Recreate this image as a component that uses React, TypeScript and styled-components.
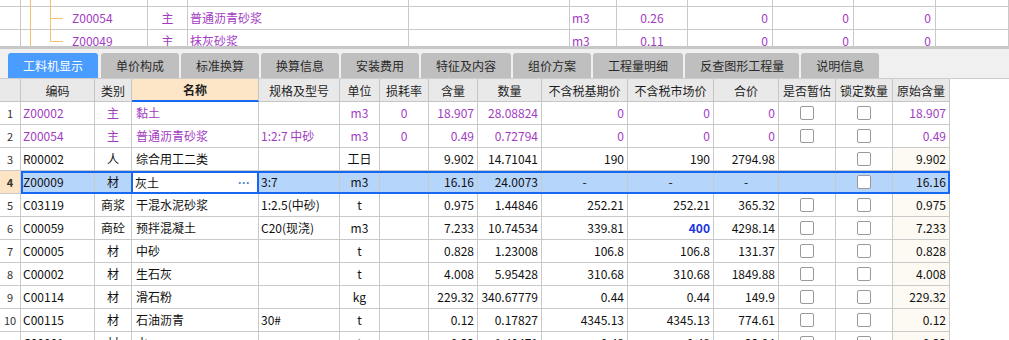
import React from 'react';
import styled, { createGlobalStyle, css } from 'styled-components';

const GlobalStyle = createGlobalStyle`
  html, body {
    margin: 0;
    padding: 0;
    background: #ffffff;
  }
  * {
    box-sizing: border-box;
  }
`;

const FONT = `"Noto Sans CJK SC", "Liberation Sans", sans-serif`;
const PURPLE = '#a23bc2';
const LINE = '#c9c9c9';
const BLUE = '#1668f2';

type Align = 'left' | 'center' | 'right';

type Material = {
  no: number;
  code: string;
  kind: string;
  name: string;
  spec: string;
  unit: string;
  loss: string;
  qty: string;
  amount: string;
  basePrice: string;
  marketPrice: string;
  total: string;
  estimate: boolean;
  orig: string;
  purple?: boolean;
  selected?: boolean;
  marketBold?: boolean;
};

const materials: Material[] = [
  { no: 1, code: 'Z00002', kind: '主', name: '黏土', spec: '', unit: 'm3', loss: '0', qty: '18.907', amount: '28.08824', basePrice: '0', marketPrice: '0', total: '0', estimate: true, orig: '18.907', purple: true },
  { no: 2, code: 'Z00054', kind: '主', name: '普通沥青砂浆', spec: '1:2:7 中砂', unit: 'm3', loss: '0', qty: '0.49', amount: '0.72794', basePrice: '0', marketPrice: '0', total: '0', estimate: true, orig: '0.49', purple: true },
  { no: 3, code: 'R00002', kind: '人', name: '综合用工二类', spec: '', unit: '工日', loss: '', qty: '9.902', amount: '14.71041', basePrice: '190', marketPrice: '190', total: '2794.98', estimate: false, orig: '9.902' },
  { no: 4, code: 'Z00009', kind: '材', name: '灰土', spec: '3:7', unit: 'm3', loss: '', qty: '16.16', amount: '24.0073', basePrice: '-', marketPrice: '-', total: '-', estimate: false, orig: '16.16', selected: true },
  { no: 5, code: 'C03119', kind: '商浆', name: '干混水泥砂浆', spec: '1:2.5(中砂)', unit: 't', loss: '', qty: '0.975', amount: '1.44846', basePrice: '252.21', marketPrice: '252.21', total: '365.32', estimate: true, orig: '0.975' },
  { no: 6, code: 'C00059', kind: '商砼', name: '预拌混凝土', spec: 'C20(现浇)', unit: 'm3', loss: '', qty: '7.233', amount: '10.74534', basePrice: '339.81', marketPrice: '400', total: '4298.14', estimate: true, orig: '7.233', marketBold: true },
  { no: 7, code: 'C00005', kind: '材', name: '中砂', spec: '', unit: 't', loss: '', qty: '0.828', amount: '1.23008', basePrice: '106.8', marketPrice: '106.8', total: '131.37', estimate: true, orig: '0.828' },
  { no: 8, code: 'C00002', kind: '材', name: '生石灰', spec: '', unit: 't', loss: '', qty: '4.008', amount: '5.95428', basePrice: '310.68', marketPrice: '310.68', total: '1849.88', estimate: true, orig: '4.008' },
  { no: 9, code: 'C00114', kind: '材', name: '滑石粉', spec: '', unit: 'kg', loss: '', qty: '229.32', amount: '340.67779', basePrice: '0.44', marketPrice: '0.44', total: '149.9', estimate: true, orig: '229.32' },
  { no: 10, code: 'C00115', kind: '材', name: '石油沥青', spec: '30#', unit: 't', loss: '', qty: '0.12', amount: '0.17827', basePrice: '4345.13', marketPrice: '4345.13', total: '774.61', estimate: true, orig: '0.12' },
  { no: 11, code: 'C00001', kind: '材', name: '水', spec: '', unit: 't', loss: '', qty: '0.33', amount: '1.40471', basePrice: '0.48', marketPrice: '0.48', total: '22.94', estimate: true, orig: '0.33' },
];

const tabs = ['工料机显示', '单价构成', '标准换算', '换算信息', '安装费用', '特征及内容', '组价方案', '工程量明细', '反查图形工程量', '说明信息'];

const headers = ['', '编码', '类别', '名称', '规格及型号', '单位', '损耗率', '含量', '数量', '不含税基期价', '不含税市场价', '合价', '是否暂估', '锁定数量', '原始含量'];

const COLS = '21px 74px 37px 127px 81px 40px 49px 49px 64px 86px 86px 65px 57px 57px 57px';
const REST = '74px 37px 127px 81px 40px 49px 49px 64px 86px 86px 65px 57px 57px 57px';
const TOP_COLS = '21px 127px 40px 221px 161px 47px 71px 85px 81px 82px 73px';

export default function App() {
  return (
    <>
      <GlobalStyle />
      <Page>
        <TopPanel>
          <TopBody>
            <TopRow>
              <TopCell />
              <TopCell $align="left">
                <TreeGuide branch={false} last={false} />
              </TopCell>
              {Array.from({ length: 9 }).map((_, i) => (
                <TopCell key={i} />
              ))}
            </TopRow>
            <TopRow>
              <TopCell />
              <TopCell $align="left" $purple>
                <TreeGuide branch last={false} />
                Z00054
              </TopCell>
              <TopCell $align="center" $purple>主</TopCell>
              <TopCell $align="left" $purple>普通沥青砂浆</TopCell>
              <TopCell />
              <TopCell $align="left" $purple>m3</TopCell>
              <TopCell $align="center" $purple>0.26</TopCell>
              <TopCell $align="right" $purple>0</TopCell>
              <TopCell $align="right" $purple>0</TopCell>
              <TopCell $align="right" $purple>0</TopCell>
              <TopCell />
            </TopRow>
            <TopRow>
              <TopCell />
              <TopCell $align="left" $purple>
                <TreeGuide branch last />
                Z00049
              </TopCell>
              <TopCell $align="center" $purple>主</TopCell>
              <TopCell $align="left" $purple>抹灰砂浆</TopCell>
              <TopCell />
              <TopCell $align="left" $purple>m3</TopCell>
              <TopCell $align="center" $purple>0.11</TopCell>
              <TopCell $align="right" $purple>0</TopCell>
              <TopCell $align="right" $purple>0</TopCell>
              <TopCell $align="right" $purple>0</TopCell>
              <TopCell />
            </TopRow>
          </TopBody>
        </TopPanel>
        <Splitter />
        <TabStrip>
          {tabs.map((t, i) => (
            <Tab key={t} $active={i === 0}>
              {t}
            </Tab>
          ))}
        </TabStrip>
        <GridPanel>
          <Grid>
            <HeaderRow>
              {headers.map((h, i) => (
                <HeaderCell key={i} $highlight={h === '名称'}>
                  {h}
                </HeaderCell>
              ))}
            </HeaderRow>
            {materials.map((m) => (
              <MaterialRow key={m.no} item={m} />
            ))}
          </Grid>
        </GridPanel>
      </Page>
    </>
  );
}

function TreeGuide({ branch, last }: { branch: boolean; last: boolean }) {
  return (
    <TreeSvg width="48" height="22" viewBox="0 0 48 22">
      <line x1="9.5" y1="0" x2="9.5" y2="22" stroke="#f7c16c" strokeWidth="1" />
      <line x1="29.5" y1="0" x2="29.5" y2={last ? 11.5 : 22} stroke="#f7c16c" strokeWidth="1" />
      {branch && <line x1="29.5" y1="11.5" x2="42" y2="11.5" stroke="#f7c16c" strokeWidth="1" />}
    </TreeSvg>
  );
}

function MaterialRow({ item }: { item: Material }) {
  const tone = item.purple ? 'purple' : 'normal';
  const cells = (
    <>
      <Cell $align="left" $tone={tone}>{item.code}</Cell>
      <Cell $align="center" $tone={tone}>{item.kind}</Cell>
      {item.selected ? (
        <EditCell>
          {item.name}
          <Dots>···</Dots>
        </EditCell>
      ) : (
        <Cell $align="left" $tone={tone} $pad={4}>{item.name}</Cell>
      )}
      <Cell $align="left" $tone={tone}>{item.spec}</Cell>
      <Cell $align="center" $tone={tone}>{item.unit}</Cell>
      <Cell $align="center" $tone={tone}>{item.loss}</Cell>
      <Cell $align="right" $tone={tone}>{item.qty}</Cell>
      <Cell $align="right" $tone={tone}>{item.amount}</Cell>
      <Cell $align={item.basePrice === '-' ? 'center' : 'right'} $tone={tone}>{item.basePrice}</Cell>
      <Cell $align={item.marketPrice === '-' ? 'center' : 'right'} $tone={item.marketBold ? 'strong' : tone}>
        {item.marketPrice}
      </Cell>
      <Cell $align={item.total === '-' ? 'center' : 'right'} $tone={tone}>{item.total}</Cell>
      <Cell $align="center">{item.estimate && <Check />}</Cell>
      <Cell $align="center">
        <Check />
      </Cell>
      <Cell $align="right" $tone={tone} $cream={!item.purple && !item.selected}>
        {item.orig}
      </Cell>
    </>
  );

  return (
    <BodyRow>
      <RowNo $current={!!item.selected}>{item.no}</RowNo>
      {item.selected ? <SelectedBand>{cells}</SelectedBand> : cells}
    </BodyRow>
  );
}

const Page = styled.div`
  width: 1009px;
  height: 340px;
  overflow: hidden;
  background: #ffffff;
  font-family: ${FONT};
  font-size: 12px;
  color: #111111;
`;

const TopPanel = styled.div`
  height: 46px;
  overflow: hidden;
  background: #ffffff;
`;

const TopBody = styled.div`
  margin-top: -16px;
`;

const TopRow = styled.div`
  display: grid;
  grid-template-columns: ${TOP_COLS};
  height: 23px;
`;

const TopCell = styled.div<{ $align?: Align; $purple?: boolean }>`
  display: flex;
  align-items: center;
  justify-content: ${(p) => (p.$align === 'right' ? 'flex-end' : p.$align === 'center' ? 'center' : 'flex-start')};
  padding: ${(p) => (p.$align === 'right' ? '0 4px 0 0' : p.$align === 'left' ? '0 0 0 2px' : '0')};
  border-right: 1px solid ${LINE};
  border-bottom: 1px solid ${LINE};
  color: ${(p) => (p.$purple ? PURPLE : '#111111')};
  line-height: 22px;
  white-space: nowrap;
  &:first-child {
    padding: 0;
  }
`;

const TreeSvg = styled.svg`
  flex: none;
  margin-left: -2px;
  margin-right: 3px;
  display: block;
`;

const Splitter = styled.div`
  height: 3px;
  background: #c8c8c8;
`;

const TabStrip = styled.div`
  display: flex;
  align-items: flex-end;
  gap: 2px;
  height: 29px;
  padding: 4px 0 0 8px;
  background: #f0f0f0;
`;

const Tab = styled.div<{ $active: boolean }>`
  height: 25px;
  padding: 0 15px;
  display: flex;
  align-items: center;
  justify-content: center;
  border-radius: 3px 3px 0 0;
  font-size: 12px;
  white-space: nowrap;
  background: #bfbfbf;
  color: #2a2a2a;
  ${(p) =>
    p.$active &&
    css`
      background: #4a9cff;
      color: #ffffff;
      margin-right: 1px;
    `}
`;

const GridPanel = styled.div`
  border-top: 1px solid #cccccc;
  background: #ffffff;
`;

const Grid = styled.div`
  width: 950px;
`;

const HeaderRow = styled.div`
  display: grid;
  grid-template-columns: ${COLS};
  height: 23px;
`;

const HeaderCell = styled.div<{ $highlight: boolean }>`
  display: flex;
  align-items: center;
  justify-content: center;
  background: #e9e9e9;
  border-right: 1px solid #c6c6c6;
  border-bottom: 1px solid #c6c6c6;
  color: #1e1e1e;
  white-space: nowrap;
  ${(p) =>
    p.$highlight &&
    css`
      background: #fde6c8;
      font-weight: 700;
      border-bottom: 2px solid ${BLUE};
    `}
`;

const BodyRow = styled.div`
  display: grid;
  grid-template-columns: ${COLS};
  height: 23px;
`;

const RowNo = styled.div<{ $current: boolean }>`
  display: flex;
  align-items: center;
  justify-content: center;
  border-right: 1px solid ${LINE};
  border-bottom: 1px solid ${LINE};
  color: #333333;
  font-size: 11px;
  background: ${(p) => (p.$current ? '#fde4c4' : '#ffffff')};
  font-weight: ${(p) => (p.$current ? 700 : 400)};
`;

const SelectedBand = styled.div`
  grid-column: 2 / -1;
  display: grid;
  grid-template-columns: ${REST};
  background: #b6d5fb;
  outline: 2px solid ${BLUE};
  outline-offset: -2px;
`;

const Cell = styled.div<{ $align: Align; $tone?: 'purple' | 'normal' | 'strong'; $cream?: boolean; $pad?: number }>`
  display: flex;
  align-items: center;
  justify-content: ${(p) => (p.$align === 'right' ? 'flex-end' : p.$align === 'center' ? 'center' : 'flex-start')};
  padding: ${(p) =>
    p.$align === 'right' ? '0 3px 0 0' : p.$align === 'left' ? `0 0 0 ${p.$pad ?? 2}px` : '0'};
  border-right: 1px solid ${LINE};
  border-bottom: 1px solid ${LINE};
  white-space: nowrap;
  overflow: hidden;
  line-height: 22px;
  background: ${(p) => (p.$cream ? '#fdf9f3' : 'transparent')};
  color: ${(p) => (p.$tone === 'purple' ? PURPLE : p.$tone === 'strong' ? '#1a33e0' : '#111111')};
  font-weight: ${(p) => (p.$tone === 'strong' ? 700 : 400)};
`;

const EditCell = styled.div`
  display: flex;
  align-items: center;
  padding: 0 7px 0 2px;
  background: #ffffff;
  border-left: 2px solid ${BLUE};
  border-right: 2px solid ${BLUE};
  margin-left: -1px;
  color: #111111;
  line-height: 22px;
`;

const Dots = styled.span`
  margin-left: auto;
  font-family: "Liberation Sans", sans-serif;
  font-size: 12px;
  color: #4f86c9;
  font-weight: 700;
  letter-spacing: 0;
`;

const Check = styled.span`
  display: block;
  width: 14px;
  height: 14px;
  border: 1px solid #9a9a9a;
  border-radius: 2px;
  background: #ffffff;
`;
